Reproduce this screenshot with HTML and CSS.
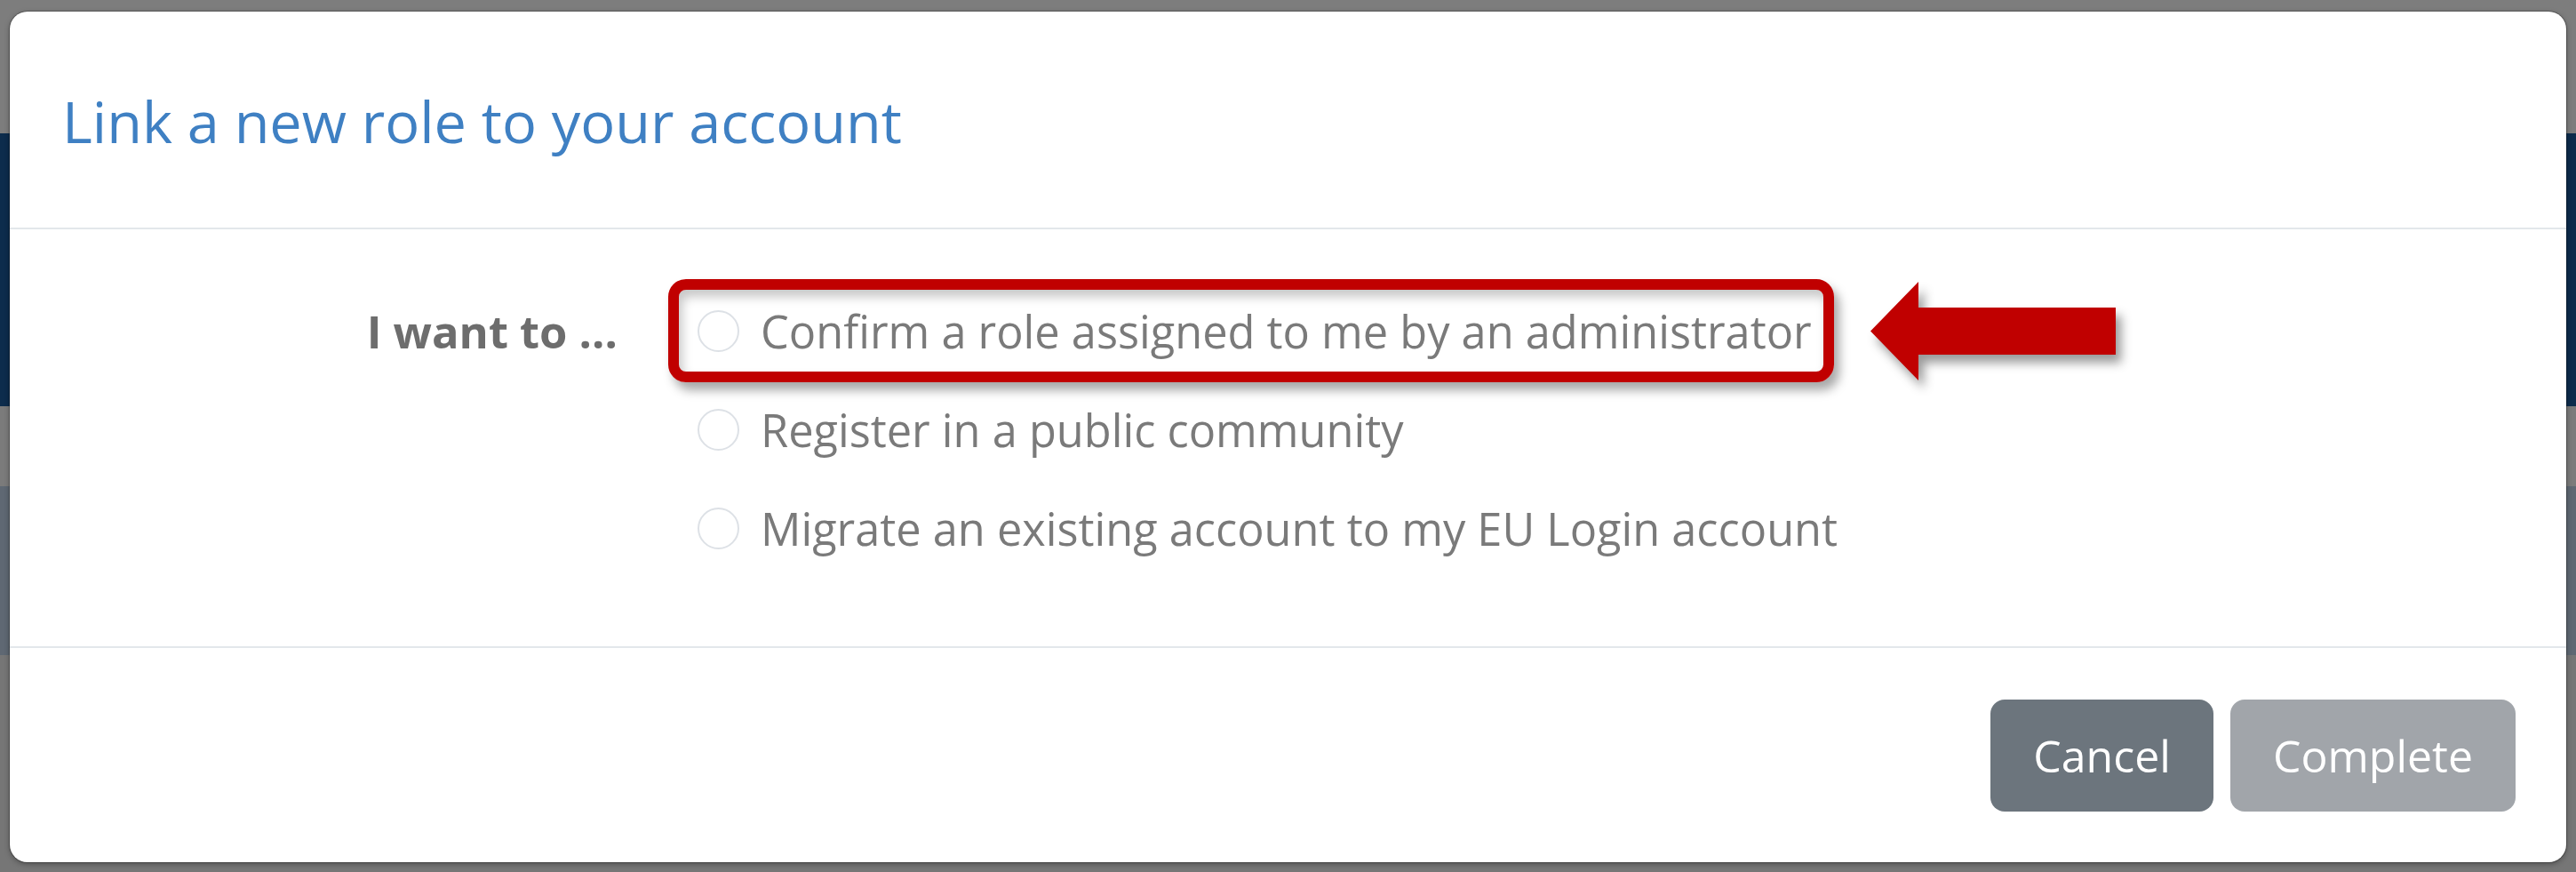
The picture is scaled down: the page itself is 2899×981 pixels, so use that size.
FILE: index.html
```html
<!DOCTYPE html>
<html lang="en">
<head>
<meta charset="utf-8">
<title>Link a new role to your account</title>
<link rel="stylesheet" href="styles.css">
</head>
<body>
<div class="page">
  <div class="band band-top"></div>
  <div class="band band-navy"></div>
  <div class="band band-gap"></div>
  <div class="band band-slate"></div>
  <div class="band band-rest"></div>
</div>
<div class="modal">
  <div class="modal-header">
    <h4 class="modal-title">Link a new role to your account</h4>
  </div>
  <div class="modal-body">
    <div class="form-row">
      <div class="form-label">I want to ...</div>
      <div class="options">
        <label class="option highlighted">
          <span class="radio"></span>
          <span class="option-text">Confirm a role assigned to me by an administrator</span>
          <svg class="arrow" viewBox="0 0 276 111" width="276" height="111" aria-hidden="true">
            <polygon points="0,55.5 54,0 54,29 276,29 276,82 54,82 54,111" fill="#c00000"/>
          </svg>
        </label>
        <label class="option">
          <span class="radio"></span>
          <span class="option-text">Register in a public community</span>
        </label>
        <label class="option">
          <span class="radio"></span>
          <span class="option-text">Migrate an existing account to my EU Login account</span>
        </label>
      </div>
    </div>
  </div>
  <div class="modal-footer">
    <button class="btn btn-cancel">Cancel</button>
    <button class="btn btn-complete">Complete</button>
  </div>
</div>
</body>
</html>
```
FILE: styles.css
```css
html, body {
  margin: 0;
  padding: 0;
}
body {
  width: 2899px;
  height: 981px;
  overflow: hidden;
  background: #7b7b7b;
  font-family: "Open Sans", "Noto Sans", "Liberation Sans", sans-serif;
  position: relative;
}
.page {
  display: flex;
  flex-direction: column;
  height: 981px;
}
.band-top { height: 150px; background: #7d7d7d; }
.band-navy { height: 307px; background: #0d2c4c; }
.band-gap { height: 90px; background: #7b7b7b; }
.band-slate { height: 190px; background: #5f6873; }
.band-rest { flex: 1; background: #767676; }

.modal {
  position: absolute;
  left: 11px;
  top: 13px;
  width: 2877px;
  height: 957px;
  background: #ffffff;
  border-radius: 20px;
  box-shadow: 0 0 0 1px rgba(0,0,0,0.25), 0 2px 6px rgba(0,0,0,0.35);
  display: flex;
  flex-direction: column;
}
.modal-header {
  height: 245px;
  border-bottom: 2px solid #e3e7eb;
  display: flex;
  align-items: center;
  padding-left: 59px;
  box-sizing: border-box;
  flex: none;
}
.modal-title {
  margin: 0;
  font-size: 64.8px;
  font-weight: 400;
  color: #3f80c3;
  line-height: 1;
  position: relative;
  top: 2px;
}
.modal-body {
  flex: 1;
  padding-top: 59px;
  box-sizing: border-box;
}
.form-row {
  display: grid;
  grid-template-columns: 684px 1fr;
  column-gap: 90px;
  align-items: start;
}
.form-label {
  text-align: right;
  font-weight: 700;
  font-size: 50.7px;
  color: #6d6d6d;
  height: 111px;
  line-height: 111px;
}
.options {
  display: flex;
  flex-direction: column;
  align-items: flex-start;
}
.option {
  display: inline-flex;
  align-items: center;
  gap: 24px;
  height: 111px;
  font-size: 50.5px;
  color: #7a7a7a;
  position: relative;
}
.radio {
  width: 47px;
  height: 47px;
  box-sizing: border-box;
  border: 2px solid #dde1e6;
  border-radius: 50%;
  background: #fff;
  flex: none;
}
.option-text {
  white-space: nowrap;
}
.highlighted::after {
  content: "";
  position: absolute;
  left: -33px;
  right: -25px;
  top: -3px;
  bottom: -2px;
  border: 12px solid #c00000;
  border-radius: 20px;
  box-shadow: 6px 9px 12px rgba(0,0,0,0.35), inset 4px 8px 12px rgba(0,0,0,0.22);
  pointer-events: none;
}
.arrow {
  position: absolute;
  left: calc(100% + 66px);
  top: 0;
  filter: drop-shadow(6px 9px 6px rgba(0,0,0,0.4));
}
.modal-footer {
  height: 243px;
  border-top: 2px solid #e3e7eb;
  box-sizing: border-box;
  display: flex;
  justify-content: flex-end;
  align-items: center;
  gap: 19px;
  padding-right: 57px;
  flex: none;
  margin-top: auto;
}
.btn {
  height: 126px;
  border: none;
  border-radius: 16px;
  font-family: inherit;
  font-size: 50px;
  color: #ffffff;
  padding: 0 48px;
}
.btn-cancel { background: #6c757d; }
.btn-complete { background: #a1a5aa; }
```
